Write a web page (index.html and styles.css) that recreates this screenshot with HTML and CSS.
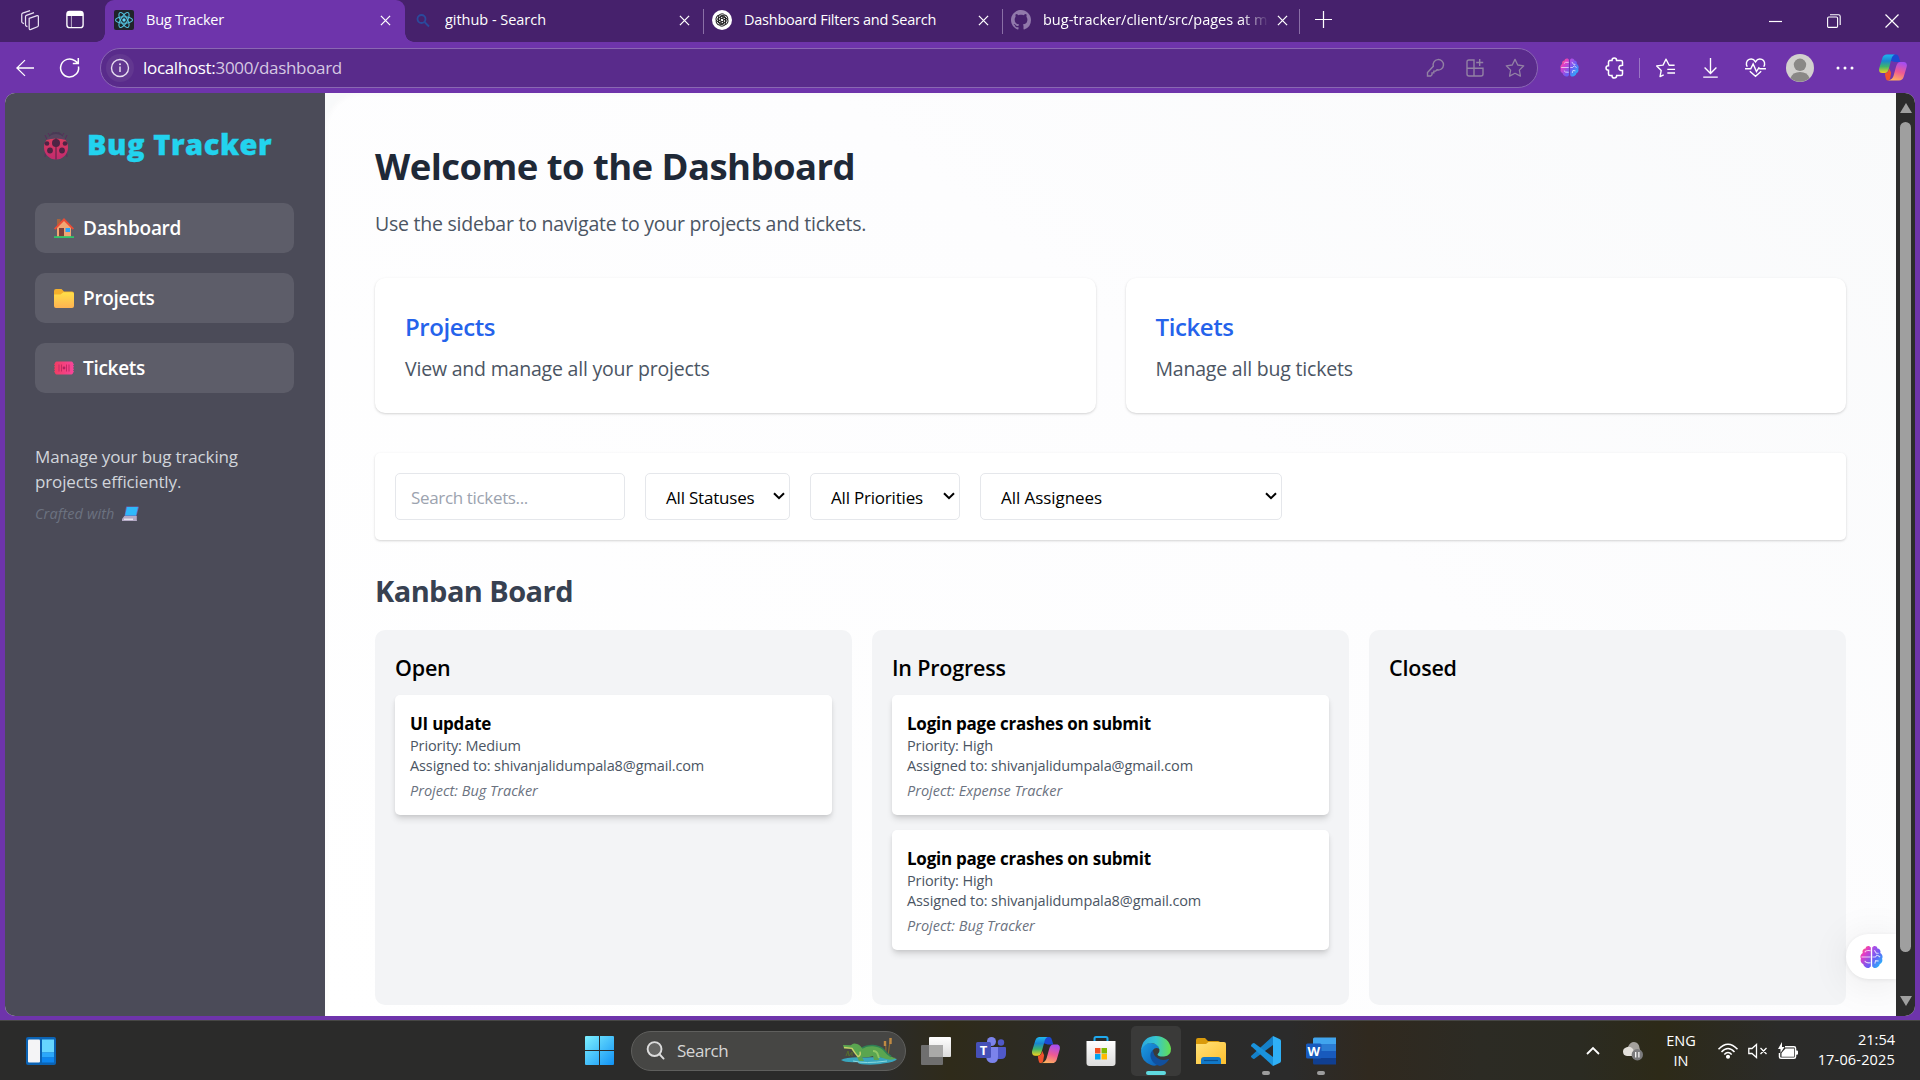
FILE: index.html
```html
<!DOCTYPE html>
<html lang="en">
<head>
<meta charset="utf-8">
<title>Bug Tracker</title>
<link rel="stylesheet" href="styles.css">
</head>
<body>
<svg class="defs" width="0" height="0" aria-hidden="true">
  <defs>
    <linearGradient id="gBrainL" x1="0" y1="0" x2=".6" y2="1"><stop offset="0" stop-color="#ff8a3c"/><stop offset=".4" stop-color="#e83bc4"/><stop offset="1" stop-color="#6a5cf5"/></linearGradient>
    <linearGradient id="gBrainR" x1="0" y1="0" x2=".6" y2="1"><stop offset="0" stop-color="#c24be0"/><stop offset=".5" stop-color="#6a5cf5"/><stop offset="1" stop-color="#27b4fb"/></linearGradient>
    <linearGradient id="gCopA" x1="0" y1="0" x2="0" y2="1"><stop offset="0" stop-color="#1fb6ee"/><stop offset=".35" stop-color="#1a86d0"/><stop offset=".65" stop-color="#3fb56b"/><stop offset="1" stop-color="#f5d21d"/></linearGradient>
    <linearGradient id="gCopB" x1=".6" y1="0" x2=".3" y2="1"><stop offset="0" stop-color="#a64df0"/><stop offset=".5" stop-color="#ee5a93"/><stop offset="1" stop-color="#ffb45c"/></linearGradient>
    <linearGradient id="gWin" x1="0" y1="0" x2="1" y2="1"><stop offset="0" stop-color="#7df0ff"/><stop offset="1" stop-color="#1192f5"/></linearGradient>
    <linearGradient id="gEdgeTop" x1="0" y1=".6" x2="1" y2=".6"><stop offset="0" stop-color="#2ba6e0"/><stop offset=".5" stop-color="#36c6d0"/><stop offset="1" stop-color="#66e04c"/></linearGradient>
    <linearGradient id="gEdgeBot" x1="0" y1="0" x2="1" y2="1"><stop offset="0" stop-color="#1b9de2"/><stop offset="1" stop-color="#0d5cb6"/></linearGradient>
    <linearGradient id="gFolder" x1="0" y1="0" x2="1" y2="1"><stop offset="0" stop-color="#ffe27a"/><stop offset="1" stop-color="#fdbf2d"/></linearGradient>
    <linearGradient id="gNavFolder" x1="0" y1="0" x2="0" y2="1"><stop offset="0" stop-color="#ffe048"/><stop offset="1" stop-color="#ffb352"/></linearGradient>
    <linearGradient id="gGrey" x1="0" y1="0" x2="0" y2="1"><stop offset="0" stop-color="#fff"/><stop offset="1" stop-color="#dcdcdc"/></linearGradient>
    <linearGradient id="gTicket" x1="0" y1="0" x2="1" y2="0"><stop offset="0" stop-color="#f03d62"/><stop offset="1" stop-color="#f8459c"/></linearGradient>
    <linearGradient id="gBug" x1="0" y1="0" x2="0" y2="1"><stop offset="0" stop-color="#dd3f5d"/><stop offset="1" stop-color="#c12a6e"/></linearGradient>
    <symbol id="close" viewBox="0 0 12 12"><path d="M1 1l10 10M11 1L1 11" stroke="currentColor" stroke-width="1.4" fill="none"/></symbol>
    <symbol id="brain" viewBox="0 0 24 24">
      <path fill="url(#gBrainL)" d="M11.3 2.2C9.8-.4 6.300.2 5.800 3 3.200 3.200 2 5.600 2.900 7.700.200 9 0 12.200 1 13.800c-1 2.200.200 4.800 2.300 5.500C3.800 23 9.500 25.300 11.300 21.600z"/>
      <path fill="url(#gBrainR)" d="M12.700 2.200C14.200-.4 17.700.2 18.200 3c2.600.2 3.800 2.600 2.900 4.700 2.700 1.300 2.900 4.500 1.900 6.100 1 2.200-.2 4.800-2.300 5.500-.5 3.700-6.200 6-8 2.300z"/>
      <path d="M1.500 12H11M5 7q1-2.300 6-1.500M5 16q1 2.600 6 2M15 5l2 3 2.500 0M13 12h3l2-2.300M18 10l3 2M15.500 19l.8-3.200 3.200.4" stroke="#fff" stroke-opacity=".75" stroke-width="1.100" fill="none"/>
    </symbol>
    <symbol id="copilot" viewBox="0 0 30 28">
      <path fill="#1c49d2" d="M9 0h9c2.500 0 3 2 3.600 4l1.200 4h-6L10 6z"/>
      <path fill="url(#gCopA)" d="M8.500 0H17c-2.200.6-3 2.500-3.700 5L10.600 15c-.9 3.300-2 5-4.600 5H3.500C.500 20-.500 17.500.300 14.500L3.500 4C4.400 1.300 6 0 8.500 0z"/>
      <path fill="#f0512c" d="M7 20c2.500-.4 3.200-2.300 4-5l2 4.500-1 6c-.4 1.500-1.500 2.500-3 2.500-1.700-.5-2-4-2.700-7z"/>
      <path fill="url(#gCopB)" d="M21.500 28H9.500c3.800-.8 5.500-2.800 6.200-5.500L18.300 13c.9-3.300 2-5 4.600-5h3.500c3 0 4 2.500 3.200 5.500L26.500 24c-.9 2.700-2.500 4-5 4z"/>
    </symbol>
  </defs>
</svg>

<div class="screen">
  <header class="tabstrip">
    <div class="tab-tools">
      <svg class="i-work" viewBox="0 0 22 24" fill="none" stroke="#e9e2f2" stroke-width="1.400" stroke-linejoin="round"><path d="M9.500 9.500l9-3q1.500-.4 1.500 1v10.300q0 1-1 1.400l-7.500 3q-2 .6-2-1.400z"/><path d="M7.500 19l-1.300-.5q-.9-.3-.9-1.300V7.500q0-1 1-1.400L15 3"/><path d="M3.500 15.500l-1.500-.6q-1-.4-1-1.400V5q0-1 1-1.400L10.500.8" /></svg>
      <svg class="i-vtab" viewBox="0 0 20 20"><rect x="1" y="1" width="18" height="18" rx="3" fill="none" stroke="#fff" stroke-width="1.500"/><path d="M1 6V4q0-3 3-3h12q3 0 3 3v2z" fill="#fff"/><path d="M6 6v13" stroke="#fff" stroke-opacity=".7"/></svg>
    </div>
    <div class="tab tab-active">
      <svg class="fav" viewBox="0 0 20 20"><rect width="20" height="20" rx="2" fill="#20232a"/><g fill="none" stroke="#53c1de" stroke-width="1.100"><ellipse cx="10" cy="10" rx="8.500" ry="3.300"/><ellipse cx="10" cy="10" rx="8.500" ry="3.300" transform="rotate(60 10 10)"/><ellipse cx="10" cy="10" rx="8.500" ry="3.300" transform="rotate(120 10 10)"/></g><circle cx="10" cy="10" r="1.700" fill="#61dafb"/></svg>
      <span class="tab-title">Bug Tracker</span>
      <svg class="tab-x"><use href="#close"/></svg>
    </div>
    <div class="tab tab-search">
      <svg class="fav" viewBox="0 0 20 20" fill="none" stroke="#2b4a9c" stroke-width="1.800"><circle cx="8.500" cy="9" r="4"/><path d="M11.500 12l4.500 4.500"/></svg>
      <span class="tab-title">github - Search</span>
      <svg class="tab-x"><use href="#close"/></svg>
    </div>
    <div class="tab tab-sep">
      <svg class="fav" viewBox="0 0 20 20"><circle cx="10" cy="10" r="10" fill="#fff"/><g fill="none" stroke="#222" stroke-width="1"><path id="petal" d="M6.500 13.200V7q0-3.200 3.500-3.200 1.700 0 2.600 1.200M8.500 9l4.500-2.600"/><use href="#petal" transform="rotate(60 10 10)"/><use href="#petal" transform="rotate(120 10 10)"/><use href="#petal" transform="rotate(180 10 10)"/><use href="#petal" transform="rotate(240 10 10)"/><use href="#petal" transform="rotate(300 10 10)"/></g></svg>
      <span class="tab-title">Dashboard Filters and Search</span>
      <svg class="tab-x"><use href="#close"/></svg>
    </div>
    <div class="tab tab-sep tab-last">
      <svg class="fav" viewBox="0 0 16 16"><path fill="#9179ab" d="M8 0C3.580 0 0 3.580 0 8c0 3.540 2.290 6.530 5.470 7.590.4.070.55-.17.55-.38 0-.19-.01-.82-.01-1.490-2.010.37-2.530-.49-2.690-.94-.09-.23-.48-.94-.82-1.130-.28-.15-.68-.52-.01-.53.63-.01 1.080.58 1.230.82.72 1.210 1.870.87 2.330.66.070-.52.28-.87.51-1.070-1.780-.2-3.640-.89-3.640-3.950 0-.87.31-1.590.82-2.150-.08-.2-.36-1.020.08-2.120 0 0 .67-.21 2.200.82.640-.18 1.320-.27 2-.27s1.360.09 2 .27c1.530-1.040 2.200-.82 2.200-.82.44 1.100.16 1.920.08 2.120.51.56.82 1.270.82 2.150 0 3.070-1.870 3.750-3.650 3.950.29.25.54.73.54 1.480 0 1.070-.01 1.930-.01 2.200 0 .21.15.46.55.38A8.010 8.010 0 0 0 16 8c0-4.420-3.580-8-8-8z"/></svg>
      <span class="tab-title tab-fade">bug-tracker/client/src/pages at m</span>
      <svg class="tab-x"><use href="#close"/></svg>
    </div>
    <svg class="i-plus" viewBox="0 0 18 18"><path d="M9 0v18M0 9h18" stroke="#fff" stroke-width="1.300"/></svg>
    <div class="win-controls">
      <svg viewBox="0 0 14 14"><path d="M0 7.500h13" stroke="#fff" stroke-width="1.200"/></svg>
      <svg viewBox="0 0 14 14" fill="none" stroke="#fff" stroke-width="1.100"><rect x=".6" y="3" width="10" height="10.400" rx="1.200"/><path d="M3 .8h8.500q1.700 0 1.700 1.700V11"/></svg>
      <svg viewBox="0 0 14 14"><path d="M.5.5l13 13M13.500.5l-13 13" stroke="#fff" stroke-width="1.200"/></svg>
    </div>
  </header>

  <div class="toolbar">
    <svg class="i-back" viewBox="0 0 20 20" fill="none" stroke="#fff" stroke-width="1.400"><path d="M20 10H1M10 1.200L1 10l9 8.800"/></svg>
    <svg class="i-reload" viewBox="0 0 20 20" fill="none" stroke="#fff" stroke-width="1.500"><path d="M18.500 8.500A9 9 0 1 1 14.800 2.600L18 5.200M18.300 0v5.500h-5.500"/></svg>
    <div class="omnibox">
      <svg class="i-info" viewBox="0 0 28 28"><circle cx="14" cy="14" r="14" fill="#623790"/><circle cx="14" cy="14" r="8.500" fill="none" stroke="#e6ddef" stroke-width="1.400"/><path d="M14 12.500v5.500" stroke="#e6ddef" stroke-width="1.500"/><circle cx="14" cy="10.200" r="1" fill="#e6ddef"/></svg>
      <span class="url"><b>localhost:</b>3000/dashboard</span>
      <div class="omni-icons">
        <svg viewBox="0 0 20 20"><path d="M8.300 8.200A5.200 5.200 0 1 1 12 11.800l-1.300 1.300H8.800v1.800H7v1.900L5.700 18H2.500v-3.500zM14.500 5.500v.1"/></svg>
        <svg viewBox="0 0 20 20"><path d="M9 10.300V2H4Q2 2 2 4v12q0 2 2 2h12q2 0 2-2v-5.700H2M9 10v8M14.700 1v7M11.200 4.500h7"/></svg>
        <svg viewBox="0 0 22 22"><path stroke-linejoin="round" d="M11 1.500l3 6.200 6.600.9-4.800 4.700 1.200 6.700-6-3.200L5 20l1.200-6.700L1.400 8.600 8 7.700z"/></svg>
      </div>
    </div>
    <div class="ext-icons">
      <svg class="e-brain"><use href="#brain"/></svg>
      <svg class="e-puz" viewBox="0 0 20 22"><path d="M4 3.500h3q0-2.500 2.300-2.500t2.300 2.500H16q1.500 0 1.500 1.500v3.300q-3.600 0-3.600 2.600t3.600 2.600V17q0 1.500-1.500 1.500h-4.300q0 2.500-2.400 2.500T7 18.500H5Q3.500 18.500 3.500 17v-3.800Q1 13.200 1 11t2.500-2.200V5q0-1.500 1.500-1.500"/></svg>
      <i class="e-sep"></i>
      <svg class="e-fav" viewBox="0 0 22 22"><path stroke-linejoin="round" d="M21 8h-6L11.500 1.300 8.300 7.800 1.300 8.700l5 5L5 20.500l4-2M13 12.500h8.500M13 16.500h8.500"/></svg>
      <svg class="e-down" viewBox="0 0 16 22"><path d="M8 0v16.500M1.500 10.500L8 17l6.500-6.500M0 21h16"/></svg>
      <svg class="e-heart" viewBox="0 0 22 20"><path d="M2.300 9.200C.500 6 1.500 2.600 4.300 1.500 7 .600 9.500 1.500 11 4c1.500-2.500 4-3.400 6.700-2.500C20.500 2.600 21.500 6 19.700 9.200M0 11.300h6l2.500-5 3.500 8 2.500-4 1 1H22M5 14l6 5.300 6-5.300"/></svg>
      <svg class="e-avatar" viewBox="0 0 28 28"><circle cx="14" cy="14" r="14" fill="#d2d0ce"/><circle cx="14" cy="10.800" r="6.200" fill="#8a8886"/><path d="M4.500 24q2-6 9.500-6t9.500 6a14 14 0 0 1-19 0z" fill="#8a8886"/></svg>
      <svg class="e-dots" viewBox="0 0 18 4"><g fill="#fff" stroke="none"><circle cx="2" cy="2" r="1.500"/><circle cx="9" cy="2" r="1.500"/><circle cx="16" cy="2" r="1.500"/></g></svg>
      <svg class="e-cop"><use href="#copilot"/></svg>
    </div>
  </div>

  <div class="viewport">
    <aside class="sidebar">
      <div class="brand">
        <svg viewBox="0 0 30 30"><path d="M9 6L7 3M21 6l2-3M3 13.500h24M4 27q0-6 4-7M26 27q0-6-4-7M4 5q1 5 5 6M26 5q-1 5-5 6M12 2l1 3M18 2l-1 3" stroke="#5b2a5c" stroke-width="1" fill="none"/><path d="M8 9q0-7 7-7t7 7q-7 4-14 0z" fill="#483a55"/><circle cx="15" cy="17.500" r="12" fill="url(#gBug)"/><path d="M5.500 10Q9 4 15 4t9.500 6q-4-1.500-9.500-1.500T5.500 10z" fill="#57465f"/><g fill="#4e2444"><circle cx="15" cy="13" r="4"/><circle cx="6" cy="13.500" r="2.300"/><circle cx="24" cy="13.500" r="2.300"/><circle cx="9" cy="20.500" r="2.900"/><circle cx="21" cy="20.500" r="2.900"/><path d="M14.500 8h1v21.500h-1z"/></g></svg>
        <span>Bug Tracker</span>
      </div>
      <nav class="nav">
        <a class="nav-item"><svg viewBox="0 0 20 20"><rect x="3" y="1" width="3.500" height="8" fill="#a5653f"/><path d="M3 19V9l7-7 7 7v10z" fill="#f0a673"/><path d="M0 10.500L10 0l10 10.500-1.300 1.200L10 3 1.300 11.700z" fill="#ea4c35"/><rect x="5" y="10" width="5" height="8.500" fill="#7c3f3a"/><rect x="11.500" y="10" width="4.500" height="4" fill="#2ba2f5"/><rect y="18.200" width="20" height="1.800" fill="#2ec56a"/></svg><span>Dashboard</span></a>
        <a class="nav-item"><svg viewBox="0 0 20 20"><path d="M0 3q0-2 2-2h5.500L10 3.500h8q2 0 2 2V10H0z" fill="#f4b02c"/><path d="M0 6.500h6.500L9.500 4.200H18q2 0 2 2V18q0 2-2 2H2q-2 0-2-2z" fill="url(#gNavFolder)"/></svg><span>Projects</span></a>
        <a class="nav-item"><svg viewBox="0 0 20 20"><path d="M2.500 3.500h15q1.500 0 1.500 1.700l1 1-1 1.200 1 1.300-1 1.300 1 1.300-1 1.200 1 1.200-1 1q0 1.800-1.500 1.800h-15Q1 16.500 1 14.700l-1-1 1-1.200-1-1.200L1 10 0 8.700l1-1.300L0 6.200l1-1Q1 3.500 2.500 3.500z" fill="url(#gTicket)"/><path d="M5 6.500v7M15 6.500v7M7.500 6.500v7M12.500 6.500v7" stroke="#c22a63" stroke-width="1"/><circle cx="10" cy="10" r="1.400" fill="#b0245f"/></svg><span>Tickets</span></a>
      </nav>
      <p class="blurb">Manage your bug tracking<br>projects efficiently.</p>
      <p class="crafted"><span>Crafted with</span><svg viewBox="0 0 17 16"><path d="M4.500.5H16q1 0 .8 1L14.500 10H2.500L4 1z" fill="#6b63b5"/><path d="M5 1h11l-2 8.500H3z" fill="#2fb9fa"/><path d="M2.300 10h12.500v4L15 15H0v-2z" fill="#b3a9c4"/><path d="M2 13.200h9" stroke="#fff"/></svg></p>
    </aside>

    <main class="main">
      <h1>Welcome to the Dashboard</h1>
      <p class="lead">Use the sidebar to navigate to your projects and tickets.</p>
      <section class="tiles">
        <article class="tile"><h2>Projects</h2><p>View and manage all your projects</p></article>
        <article class="tile"><h2>Tickets</h2><p>Manage all bug tickets</p></article>
      </section>
      <section class="filters">
        <div class="field field-search"><span>Search tickets...</span></div>
        <div class="field field-status"><span>All Statuses</span><svg viewBox="0 0 12 8"><path d="M1 1.200l5 5 5-5"/></svg></div>
        <div class="field field-priority"><span>All Priorities</span><svg viewBox="0 0 12 8"><path d="M1 1.200l5 5 5-5"/></svg></div>
        <div class="field field-assignee"><span>All Assignees</span><svg viewBox="0 0 12 8"><path d="M1 1.200l5 5 5-5"/></svg></div>
      </section>
      <h2 class="board-title">Kanban Board</h2>
      <section class="board">
        <div class="column">
          <h3>Open</h3>
          <article class="ticket"><h4>UI update</h4><p>Priority: Medium</p><p>Assigned to: shivanjalidumpala8@gmail.com</p><p class="proj">Project: Bug Tracker</p></article>
        </div>
        <div class="column">
          <h3>In Progress</h3>
          <article class="ticket"><h4>Login page crashes on submit</h4><p>Priority: High</p><p>Assigned to: shivanjalidumpala@gmail.com</p><p class="proj">Project: Expense Tracker</p></article>
          <article class="ticket"><h4>Login page crashes on submit</h4><p>Priority: High</p><p>Assigned to: shivanjalidumpala8@gmail.com</p><p class="proj">Project: Bug Tracker</p></article>
        </div>
        <div class="column"><h3>Closed</h3></div>
      </section>
      <div class="float-brain"><svg><use href="#brain"/></svg></div>
    </main>
    <div class="scrollbar"><i class="arrow-up"></i><i class="thumb"></i><i class="arrow-down"></i></div>
  </div>

  <footer class="taskbar">
    <svg class="t-widgets" viewBox="0 0 30 28"><rect width="30" height="28" rx="2" fill="#0b63b4"/><rect x="2" y="2.500" width="12" height="23" rx="1" fill="#f4f4f6"/><rect x="16" y="2.500" width="12" height="13" fill="#66d6ff"/><rect x="16" y="15.500" width="12" height="5" fill="#2ba8fb"/><rect x="16" y="20.500" width="12" height="5" fill="#0d86f0"/></svg>
    <div class="t-center">
      <svg class="t-start" viewBox="0 0 29 29"><path fill="url(#gWin)" d="M0 1q0-1 1-1h13v14H0zM15 0h13q1 0 1 1v13H15zM0 15h14v14H1q-1 0-1-1zM15 15h14v13q0 1-1 1H15z"/></svg>
      <div class="t-search">
        <svg class="t-mag" viewBox="0 0 20 20" fill="none" stroke="#dcdcdc" stroke-width="2"><circle cx="9" cy="8.500" r="7.300" fill="#656563"/><path d="M14 13.700l4.500 4.800" stroke-linecap="round"/></svg>
        <span>Search</span>
        <svg class="t-croc" viewBox="0 0 56 28"><path d="M47 19q1-10 3-18M44.500 18q1-8-.5-13" stroke="#8a6a35" stroke-width="1.200" fill="none"/><path d="M49.500 1v6M44 4v5" stroke="#c08a43" stroke-width="2.400"/><path d="M5 19l2-5 1 5 3-4v4" stroke="#56702b" fill="none"/><path d="M0 23q6-3.500 25-2.500 18-1.500 31 1.500-2 3-14 4.500-6 1.500-18 1-8-.5-7-2.500-12 1-17-2z" fill="#39a5bd"/><path d="M12 24q12 3 34 0" stroke="#8adbe0" fill="none"/><path d="M2 8l8 .3q2-2.600 5-1.500 4 .7 6 4.200 5-3 11-2.500 7 .5 11 4.500 3 4 7 6.500 3 1.500 5 1.500-3 3-10 1-4-1-8-3l1 4h-5l-1-4q-6 2-11 1l2 4h-5l-3-6q-4-5-5-6.500L3 11.500z" fill="#5aa550"/><path d="M21 11q5-3 11-2.500 7 .5 11 4.500 3 4 7 6.500" stroke="#2f7f55" stroke-width="1.600" fill="none"/><path d="M3 10.500l8 .8q3 5 6 8.300 3-1 2-5" stroke="#c9cf6a" stroke-width="1.400" fill="none"/><path d="M32 14q4 0 5 4l1 3" stroke="#8fc765" stroke-width="2" fill="none"/></svg>
      </div>
      <svg class="t-icon" viewBox="0 0 30 30"><rect x="8" y="1" width="22" height="20" rx="1" fill="url(#gGrey)"/><rect y="9" width="22" height="20" rx="1" fill="#6f6f6f"/><path d="M8 9h14v12H8z" fill="#a9a9a8"/></svg>
      <svg class="t-icon" viewBox="0 0 30 30"><circle cx="25" cy="6.500" r="3.200" fill="#5059c9"/><path d="M20 11h9q1 0 1 1v6q0 5-5 5h-4z" fill="#5059c9"/><circle cx="15.500" cy="5.500" r="4.500" fill="#7b83eb"/><path d="M11 11h11v10q0 6-5.500 6T10 21z" fill="#7b83eb"/><rect y="6" width="15" height="16" rx="1.500" fill="#4650b8"/><text x="7.500" y="18.500" class="glyph-t">T</text></svg>
      <svg class="t-icon" viewBox="-1 -1 32 32"><use href="#copilot" width="30" height="28"/></svg>
      <svg class="t-icon" viewBox="0 0 30 30"><path d="M8.500 6V2.500q0-1.500 1.500-1.500h10q1.500 0 1.500 1.500V6" stroke="#1fa9ee" stroke-width="2" fill="none"/><path d="M.5 5h29v22q0 3-3 3h-23q-3 0-3-3z" fill="url(#gGrey)"/><path d="M9 12h5.500v5.500H9z" fill="#f25022"/><path d="M15.500 12H21v5.500h-5.500z" fill="#7fba00"/><path d="M9 18h5.500v5.500H9z" fill="#00a4ef"/><path d="M15.500 18H21v5.500h-5.500z" fill="#ffb900"/></svg>
      <div class="t-tile"><svg viewBox="0 0 30 30"><path fill="url(#gEdgeBot)" d="M0 15Q1.500 6.500 10 7q8 .5 9.500 8-.8-3-4-3-4.500.5-4.300 5.500.3 7 8.300 9.500Q15 31 10 29 0 25 0 15z"/><path fill="#11509e" d="M12 14q-4 3-2 8.500 2 6 9 7.500 5-.7 9-6.500.3-.9-.8-.5-6 2.500-11-1-4-3-4.200-8z"/><path fill="url(#gEdgeTop)" d="M0 14.500Q1.500 0 15 0q13 .8 15 12.500.3 7-7 8-6 .3-6.500-2 2.500-2 2-5Q17 7.500 10 7 3 7.200 0 14.500z"/></svg><i class="run run-on"></i></div>
      <svg class="t-icon" viewBox="0 0 30 30"><path d="M0 4q0-2 2-2h7l3 3h10q2 0 2 2v4H0z" fill="#d99a0b"/><path d="M0 8h10l2.500-2H28q2 0 2 2v20H0z" fill="url(#gFolder)"/><path d="M5 28v-4q0-3 3-3h14q3 0 3 3v4z" fill="#1179c9"/><path d="M8 24.500h14" stroke="#0b4f8e" stroke-width="1.200"/></svg>
      <div class="t-slot"><svg viewBox="0 0 30 30"><path d="M22 0v9L3.500 22.800q-1 .6-1.800-.2L.3 21.200q-.6-.8 0-1.500z" fill="#1580c8"/><path d="M22 30v-9L3.500 7.200q-1-.6-1.800.2L.3 8.800q-.6.8 0 1.500z" fill="#1a93dc"/><path d="M22 0l6.500 3Q30 3.700 30 5v20q0 1.300-1.500 2L22 30z" fill="#2fb0f6"/></svg><i class="run"></i></div>
      <div class="t-slot"><svg viewBox="0 0 30 30"><path d="M7 3q0-1.500 1.500-1.500H30V8H7z" fill="#41a5ee"/><path d="M7 8h23v7H7z" fill="#2b7cd3"/><path d="M7 15h23v7H7z" fill="#185abd"/><path d="M7 22h23v6.500H8.500Q7 28.500 7 27z" fill="#103f91"/><rect y="7.500" width="15.500" height="15" rx="1.500" fill="#185abd"/><text x="7.700" y="19.500" class="glyph-t">W</text></svg><i class="run"></i></div>
    </div>
    <div class="tray">
      <svg class="y-chev" viewBox="0 0 14 9"><path d="M1 8l6-6 6 6" stroke="#fff" stroke-width="1.800" fill="none"/></svg>
      <svg class="y-cloud" viewBox="0 0 20 20"><path d="M5 6Q7 1 11 1q5 .5 5.500 6l2 6H5z" fill="#a3a09c"/><path d="M3 6.500q4-2 7 1.500l3 7H4Q0 14.500 0 10.500 0 7.500 3 6.500z" fill="#e3e0db"/><circle cx="14.300" cy="13.700" r="5.700" fill="#7b7b7d"/><path d="M12.700 11v5.500M15.900 11v5.500" stroke="#fff" stroke-width="1.200"/></svg>
      <div class="lang">ENG<br>IN</div>
      <svg class="y-wifi" viewBox="0 0 20 16" fill="none" stroke="#fff" stroke-width="1.500"><path d="M.5 6.300Q10-4 19.500 6.300M3.500 9Q10 2 16.500 9M6.300 11.600Q10 7.600 13.700 11.600"/><circle cx="10" cy="13.700" r="1.300" fill="#fff"/></svg>
      <svg class="y-vol" viewBox="0 0 20 16" fill="none" stroke="#fff" stroke-width="1.300"><path d="M.8 5.500H4L8.500 1.500v13L4 10.500H.8zM12.500 5l6 6M18.500 5l-6 6"/></svg>
      <svg class="y-bat" viewBox="0 0 20 18"><path d="M7 4.800h9q1.500 0 1.500 1.500v8.500q0 1.500-1.500 1.500H3q-1.500 0-1.500-1.500V11" fill="none" stroke="#fff" stroke-width="1.500"/><path d="M7.500 6.500H16v8.200H3.500V11z" fill="#fff"/><path d="M18 8.500h1q1 0 1 1v2.300q0 1-1 1h-1zM4 0L0 7h2.500v4L6.500 5H4z" fill="#fff"/></svg>
      <div class="clock">21:54<br><span class="date">17-06-2025</span></div>
    </div>
  </footer>
</div>
</body>
</html>
```
FILE: styles.css
```css
* { box-sizing: border-box; }
body { margin: 0; font-family: "Open Sans", "Noto Sans", sans-serif; }
h1, h2, h3, h4, p { margin: 0; }
svg { display: block; flex: none; overflow: visible; }
.defs { position: absolute; }
.screen { width: 1920px; height: 1080px; overflow: hidden; display: flex; flex-direction: column; background: #6e34ab; }

/* tab strip */
.tabstrip { height: 42px; display: flex; align-items: flex-start; background: #46216c; color: #fff; }
.tab-tools { width: 105px; height: 42px; padding: 10px 0 0 20px; display: flex; gap: 25px; }
.i-work { width: 21px; height: 21px; }
.i-vtab { width: 18px; height: 19px; }
.tab { width: 299px; height: 42px; padding: 10px 14px 0 10px; display: flex; }
.tab-active { width: 300px; padding-left: 9px; background: #6e34ab; border-radius: 9px 9px 0 0; position: relative; }
.tab-active::before, .tab-active::after { content: ""; position: absolute; bottom: 0; width: 9px; height: 9px; }
.tab-active::before { left: -9px; background: radial-gradient(circle at 0 0, #46216c 8.5px, #6e34ab 9px); }
.tab-active::after { right: -9px; background: radial-gradient(circle at 100% 0, #46216c 8.5px, #6e34ab 9px); }
.tab-search { padding-left: 8px; letter-spacing: 0; }
.tab-sep { padding-left: 8px; position: relative; }
.tab-sep::before { content: ""; position: absolute; left: -1px; top: 9px; width: 1px; height: 25px; background: #8a6fa6; }
.tab-last::after { content: ""; position: absolute; right: 2px; top: 9px; width: 1px; height: 25px; background: #8a6fa6; }
.fav { width: 20px; height: 20px; margin-right: 12px; }
.tab-title { flex: 1; min-width: 0; height: 20px; line-height: 19px; font-size: 14.5px; letter-spacing: -.24px; white-space: nowrap; overflow: hidden; }
.tab-search .tab-title { letter-spacing: -.03px; }
.tab-fade { letter-spacing: 0; -webkit-mask-image: linear-gradient(90deg, #000 calc(100% - 28px), transparent); mask-image: linear-gradient(90deg, #000 calc(100% - 28px), transparent); }
.tab-x { width: 11px; height: 11px; margin: 5px 0 0 8px; }
.i-plus { width: 17px; height: 17px; margin: 11px 0 0 13px; }
.win-controls { margin: 14px 21px 0 auto; display: flex; gap: 44px; }
.win-controls svg { width: 14px; height: 14px; }

/* address row */
.toolbar { height: 51px; display: flex; align-items: center; padding: 0 13px 0 15px; }
.i-back { width: 20px; height: 18px; }
.i-reload { width: 20px; height: 20px; margin-left: 25px; }
.omnibox { width: 1438px; height: 40px; margin-left: 20px; border: 1px solid #8a67b3; border-radius: 20px; background: #592b8b; display: flex; align-items: center; padding: 0 12px 0 5px; }
.i-info { width: 28px; height: 28px; }
.url { margin-left: 9px; font-size: 17px; line-height: 24px; letter-spacing: -.32px; color: #d5c8e2; }
.url b { font-weight: 400; color: #fff; }
.omni-icons { margin-left: auto; display: flex; align-items: center; gap: 20px; fill: none; stroke: #9281a4; stroke-width: 1.4; }
.omni-icons svg { width: 20px; height: 20px; }
.ext-icons { flex: 1; display: flex; align-items: center; fill: none; stroke: #fff; stroke-width: 1.5; }
.e-brain { width: 19px; height: 19px; margin-left: 22px; stroke: none; }
.e-puz { width: 20px; height: 22px; margin-left: 26px; }
.e-sep { width: 1px; height: 20px; margin-left: 14px; background: #9a76c4; }
.e-fav { width: 21px; height: 20px; margin-left: 15px; }
.e-down { width: 15px; height: 20px; margin-left: 27px; }
.e-heart { width: 21px; height: 19px; margin-left: 27px; }
.e-avatar { width: 28px; height: 28px; margin-left: 20px; stroke: none; }
.e-dots { width: 18px; height: 4px; margin-left: 22px; }
.e-cop { width: 28px; height: 27px; margin-left: auto; stroke: none; }

/* page */
.viewport { height: 923px; margin: 0 5px; display: flex; border-radius: 10px; overflow: hidden; background: #f8f9fa; }
.sidebar { width: 320px; padding: 31px 31px 0 30px; background: #4b4b58; }
.brand { height: 40px; display: flex; align-items: center; font-size: 29px; font-weight: 800; line-height: 40px; letter-spacing: .55px; color: #22d3ee; white-space: nowrap; -webkit-text-stroke: .4px #22d3ee; }
.brand svg { width: 30px; height: 30px; margin: 1px 16px 0 6px; }
.nav { margin-top: 39px; display: flex; flex-direction: column; gap: 20px; }
.nav-item { height: 50px; padding: 0 19px; border-radius: 10px; background: #5d5d69; display: flex; align-items: center; gap: 9px; font-size: 19px; letter-spacing: -.3px; font-weight: 600; color: #fff; }
.nav-item svg { width: 20px; height: 20px; }
.blurb { margin-top: 51px; font-size: 17px; line-height: 25px; letter-spacing: -.14px; color: #d1d5db; white-space: nowrap; }
.crafted { margin-top: 10px; display: flex; align-items: center; gap: 8px; font-size: 14.5px; line-height: 20px; letter-spacing: .1px; font-style: italic; color: #6b7280; }
.crafted svg { width: 17px; height: 16px; }
.main { width: 1571px; padding: 51px 50px 0; position: relative; border-radius: 34px 0 0 0; background: linear-gradient(40deg, #fff 0%, #fdfdfe 60%, #f9fafb 100%); box-shadow: inset 2px 2px 4px rgba(0, 0, 0, .02); }
.main h1 { font-size: 36.5px; line-height: 45px; font-weight: 700; letter-spacing: -.57px; color: #1f2937; white-space: nowrap; }
.lead { margin-top: 20px; font-size: 19.5px; line-height: 30px; letter-spacing: -.24px; color: #4b5563; }
.tiles { margin-top: 39px; display: grid; grid-template-columns: 1fr 1fr; gap: 30px; }
.tile { height: 135px; padding: 31px 30px 29px; border-radius: 10px; background: #fff; box-shadow: 0 1px 3px rgba(0, 0, 0, .12), 0 1px 2px rgba(0, 0, 0, .06); }
.tile h2 { font-size: 24px; line-height: 35px; letter-spacing: -.42px; font-weight: 600; color: #2563eb; }
.tile p { margin-top: 10px; font-size: 19.5px; line-height: 30px; letter-spacing: -.2px; color: #4b5563; }
.filters { margin-top: 40px; height: 87px; padding: 20px; display: flex; gap: 20px; border-radius: 5px; background: #fff; box-shadow: 0 1px 3px rgba(0, 0, 0, .12), 0 1px 2px rgba(0, 0, 0, .06); }
.field { height: 47px; border: 1px solid #e5e7eb; border-radius: 5px; display: flex; align-items: center; justify-content: space-between; padding: 2px 4px 0 20px; font-size: 17px; letter-spacing: -.2px; color: #000; white-space: nowrap; }
.field svg { width: 12px; height: 8px; margin-bottom: 3px; fill: none; stroke: #000; stroke-width: 2; }
.field-search { width: 230px; padding-left: 15px; letter-spacing: -.34px; color: #9ca3af; }
.field-status { width: 145px; }
.field-priority { width: 150px; }
.field-assignee { width: 302px; letter-spacing: -.06px; }
.board-title { margin-top: 31px; font-size: 29px; line-height: 40px; letter-spacing: -.57px; font-weight: 700; color: #374151; }
.board { margin-top: 19px; display: grid; grid-template-columns: repeat(3, 1fr); gap: 20px; }
.column { height: 375px; padding: 20px; border-radius: 10px; background: #f3f4f6; display: flex; flex-direction: column; }
.column h3 { font-size: 21.5px; line-height: 35px; letter-spacing: -.2px; font-weight: 600; margin-bottom: 10px; color: #000; }
.ticket { height: 120px; padding: 16px 15px 14px; border-radius: 5px; background: #fff; box-shadow: 0 5px 7px -1px rgba(0, 0, 0, .12), 0 2px 4px -1px rgba(0, 0, 0, .1); white-space: nowrap; }
.ticket + .ticket { margin-top: 15px; }
.ticket h4 { font-size: 17px; line-height: 25px; letter-spacing: -.24px; font-weight: 700; color: #000; }
.ticket p { font-size: 14.5px; line-height: 20px; letter-spacing: -.12px; color: #4b5563; }
.ticket .proj { margin-top: 5px; letter-spacing: 0; font-style: italic; color: #6b7280; }
.float-brain { position: absolute; right: 0; top: 841px; width: 50px; height: 45px; padding: 11px 0 0 14px; border-radius: 23px 0 0 23px; background: #fff; box-shadow: 0 4px 40px rgba(0, 0, 0, .09), 0 1px 4px rgba(0, 0, 0, .07); clip-path: inset(-50px 0 -50px -70px); }
.float-brain svg { width: 23px; height: 24px; }
.scrollbar { flex: 1; background: #2c2c2c; display: flex; flex-direction: column; align-items: center; padding: 10px 0; }
.arrow-up { border: 6.500px solid transparent; border-top: 0; border-bottom: 10px solid #9f9f9f; }
.thumb { width: 11px; height: 830px; margin-top: 9px; border-radius: 6px; background: #9f9f9f; }
.arrow-down { margin-top: auto; border: 6.500px solid transparent; border-bottom: 0; border-top: 10px solid #9f9f9f; }

/* taskbar */
.taskbar { margin-top: 4px; height: 60px; border-top: 1px solid #474745; display: flex; align-items: center; color: #fff; background: linear-gradient(90deg, #2b2b2a 0, #2b2b2a 880px, #2f2b1a 950px, #2b2b29 1080px, #2b2b2b 1290px, #30291f 1370px, #2c2b24 1480px, #2b2b22 1580px, #2d2a18 1660px, #2b2b29 1780px, #2b2b2b 100%); }
.t-widgets { width: 30px; height: 28px; margin-left: 26px; }
.t-center { margin-left: 529px; display: flex; align-items: center; gap: 25px; }
.t-start { width: 29px; height: 29px; }
.t-search { width: 275px; height: 40px; margin: 0 -10px 0 -8px; border: 1px solid #5f5f5d; border-radius: 20px; background: #464644; display: flex; align-items: center; padding: 0 8px 0 14px; font-size: 17px; letter-spacing: -.45px; color: #d6d6d6; }
.t-mag { width: 19px; height: 19px; margin-right: 12px; }
.t-croc { width: 56px; height: 28px; margin-left: auto; }
.t-icon { width: 30px; height: 30px; }
.t-tile { width: 50px; height: 50px; margin: 0 -10px; border-radius: 5px; background: #3a3a39; display: flex; align-items: center; justify-content: center; position: relative; }
.t-tile svg, .t-slot svg { width: 30px; height: 30px; }
.t-slot { position: relative; }
.run { position: absolute; left: 11px; bottom: -9px; width: 8px; height: 4px; border-radius: 2px; background: #9d9d9d; }
.run-on { left: 15px; bottom: 1px; width: 20px; background: #5fd9df; }
.glyph-t { font: 700 13px "Open Sans", sans-serif; fill: #fff; text-anchor: middle; }
.tray { margin: 0 25px 0 auto; display: flex; align-items: center; font-size: 14.5px; line-height: 20px; }
.y-chev { width: 14px; height: 9px; margin-right: 23px; }
.y-cloud { width: 20px; height: 20px; margin-right: 23px; }
.lang { width: 30px; text-align: center; margin-right: 22px; }
.y-wifi { width: 20px; height: 16px; margin-right: 10px; }
.y-vol { width: 20px; height: 16px; margin-right: 10px; }
.y-bat { width: 20px; height: 18px; margin-right: 19px; }
.clock { width: 78px; margin-top: -1px; text-align: right; white-space: nowrap; }
.date { letter-spacing: .17px; }
```
